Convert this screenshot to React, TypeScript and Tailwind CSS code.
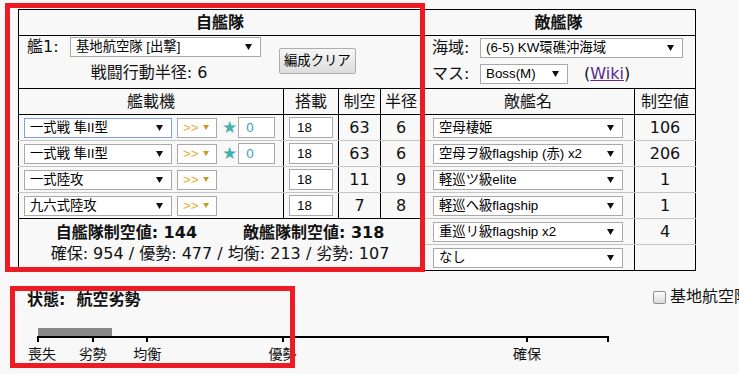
import React from "react";

type Plane = { name: string; star?: boolean; load: number; air: number; radius: number; focus?: boolean };
type Enemy = { name: string; air: number | null };

const planes: Plane[] = [
  { name: "一式戦 隼II型", star: true, load: 18, air: 63, radius: 6, focus: true },
  { name: "一式戦 隼II型", star: true, load: 18, air: 63, radius: 6 },
  { name: "一式陸攻", load: 18, air: 11, radius: 9 },
  { name: "九六式陸攻", load: 18, air: 7, radius: 8 },
];

const enemies: Enemy[] = [
  { name: "空母棲姫", air: 106 },
  { name: "空母ヲ級flagship (赤) x2", air: 206 },
  { name: "軽巡ツ級elite", air: 1 },
  { name: "軽巡ヘ級flagship", air: 1 },
  { name: "重巡リ級flagship x2", air: 4 },
  { name: "なし", air: null },
];

// air superiority thresholds
const marks = [
  { label: "喪失", value: 0 },
  { label: "劣勢", value: 107 },
  { label: "均衡", value: 213 },
  { label: "優勢", value: 477 },
  { label: "確保", value: 954 },
];
const scale = 489 / 954;
const axisEnd = 570;
const ownAir = 144;

const uiFont = "font-['Liberation_Sans','Noto_Sans_CJK_JP',sans-serif] text-[13.33px]";

function Arrow({ color = "#111", w = 7, h = 6 }: { color?: string; w?: number; h?: number }) {
  return (
    <svg width={w} height={h} viewBox={`0 0 ${w} ${h}`} className="shrink-0">
      <polygon points={`0,0 ${w},0 ${w / 2},${h}`} fill={color} />
    </svg>
  );
}

function Select({ text, className, focus }: { text: string; className: string; focus?: boolean }) {
  return (
    <div
      className={`flex h-[20px] items-center justify-between border bg-white pl-[5px] pr-[8px] leading-none text-black ${uiFont} ${
        focus ? "border-[#7da2e3]" : "border-[#a9a9a9]"
      } ${className}`}
    >
      <span className="whitespace-nowrap">{text}</span>
      <Arrow />
    </div>
  );
}

function Input({ value, className }: { value: string; className: string }) {
  return (
    <div className={`flex h-[21px] items-center border border-[#a9a9a9] bg-white pl-[7px] leading-none ${uiFont} ${className}`}>
      {value}
    </div>
  );
}

export default function App() {
  return (
    <div className="relative h-[374px] w-[739px] overflow-hidden bg-[#f8f8f8] font-['DejaVu_Sans','Noto_Sans_CJK_JP',sans-serif] text-[16px] text-[#111]">
      <div className="pl-[18px] pt-[9px]">
        <table className="w-[677px] table-fixed border-collapse">
          <colgroup>
            <col className="w-[265px]" />
            <col className="w-[55px]" />
            <col className="w-[42px]" />
            <col className="w-[41px]" />
            <col className="w-[213px]" />
            <col className="w-[61px]" />
          </colgroup>
          <tbody>
            <tr>
              <td colSpan={4} className="h-[26px] border border-black p-0 text-center font-bold leading-[20px]">
                自艦隊
              </td>
              <td colSpan={2} className="h-[26px] border border-black p-0 text-center font-bold leading-[20px]">
                敵艦隊
              </td>
            </tr>
            <tr>
              <td colSpan={4} className="h-[53px] border border-black p-0 align-top">
                <div className="flex items-center pl-[8px]">
                  <div className="flex w-[234px] flex-col pt-[1px]">
                    <div className="flex items-center">
                      <span className="w-[43px] leading-[20px]">艦1:</span>
                      <Select text="基地航空隊 [出撃]" className="w-[191px]" />
                    </div>
                    <div className="mt-[6px] pl-[10px] text-center leading-[20px]">戦闘行動半径: 6</div>
                  </div>
                  <button
                    className={`ml-[18px] mt-[2px] h-[26px] rounded-[2px] border border-[#adadad] bg-gradient-to-b from-[#f6f6f6] to-[#dddddd] px-[4px] leading-none text-black ${uiFont}`}
                  >
                    編成クリア
                  </button>
                </div>
              </td>
              <td colSpan={2} className="h-[53px] border border-black p-0 align-top">
                <div className="flex flex-col gap-[6px] pl-[10px] pt-[2px]">
                  <div className="flex items-center">
                    <span className="w-[48px] leading-[20px]">海域:</span>
                    <Select text="(6-5) KW環礁沖海域" className="w-[203px]" />
                  </div>
                  <div className="flex items-center">
                    <span className="w-[48px] leading-[20px]">マス:</span>
                    <Select text="Boss(M)" className="w-[88px]" />
                    <span className="ml-[16px] leading-[20px]">
                      (<span className="text-[#5b2a8e] underline">Wiki</span>)
                    </span>
                  </div>
                </div>
              </td>
            </tr>
            <tr className="text-center leading-[20px]">
              <td className="h-[26px] border border-black p-0">艦載機</td>
              <td className="h-[26px] border border-black p-0">搭載</td>
              <td className="h-[26px] border border-black p-0">制空</td>
              <td className="h-[26px] border border-black p-0">半径</td>
              <td className="h-[26px] border border-black p-0">敵艦名</td>
              <td className="h-[26px] border border-black p-0">制空値</td>
            </tr>
            {enemies.map((e, i) => {
              const p = planes[i];
              const leftCls = `h-[26px] border border-black p-0 ${i > 0 ? "border-t-[#c4c4c4]" : ""} ${
                i < 3 ? "border-b-[#c4c4c4]" : ""
              }`;
              const rightCls = `h-[26px] border border-black p-0 ${i > 0 ? "border-t-[#c4c4c4]" : ""} ${
                i < 5 ? "border-b-[#c4c4c4]" : ""
              }`;
              return (
                <tr key={i}>
                  {p && (
                    <>
                      <td className={leftCls}>
                        <div className="flex items-center pl-[5px]">
                          <Select text={p.name} focus={p.focus} className="w-[148px]" />
                          <div
                            className={`ml-[5px] flex h-[20px] w-[40px] items-center justify-between border border-[#a9a9a9] bg-white pl-[5px] pr-[7px] leading-none text-[#eeaa33] ${uiFont}`}
                          >
                            <span>&gt;&gt;</span>
                            <Arrow color="#cc9922" w={6} h={5} />
                          </div>
                          {p.star && (
                            <>
                              <span className="ml-[5px] text-[17px] leading-none text-[#45b0ad]">★</span>
                              <Input value="0" className="ml-[1px] w-[37px] text-[#3ba0c0]" />
                            </>
                          )}
                        </div>
                      </td>
                      <td className={leftCls}>
                        <Input value={String(p.load)} className="ml-[5px] w-[44px] text-black" />
                      </td>
                      <td className={`${leftCls} text-center leading-[20px]`}>{p.air}</td>
                      <td className={`${leftCls} text-center leading-[20px]`}>{p.radius}</td>
                    </>
                  )}
                  {i === 4 && (
                    <td colSpan={4} rowSpan={2} className="border border-black p-0 pb-[4px] text-center leading-[21px]">
                      <div className="font-bold">
                        自艦隊制空値: {ownAir}
                        <span className="ml-[46px]">敵艦隊制空値: 318</span>
                      </div>
                      <div>確保: 954 / 優勢: 477 / 均衡: 213 / 劣勢: 107</div>
                    </td>
                  )}
                  <td className={rightCls}>
                    <Select text={e.name} className="ml-[11px] h-[19px] w-[190px]" />
                  </td>
                  <td className={`${rightCls} text-center leading-[20px]`}>{e.air ?? ""}</td>
                </tr>
              );
            })}
          </tbody>
        </table>
      </div>

      <div className="flex items-start">
        <div className="w-[653px] shrink-0 pl-[27px] pt-[19px]">
          <p className="font-bold leading-[20px]">
            状態:<span className="ml-[11px]">航空劣勢</span>
          </p>
          <div className="relative ml-[11px] mt-[18px] h-[36px] w-[572px]">
            <div className="absolute left-0 top-0 h-[8px] bg-[#888888]" style={{ width: ownAir * scale }} />
            <div className="absolute left-[-1px] top-[8px] h-[2px] w-[572px] bg-black" />
            {[...marks.map((m) => m.value * scale), axisEnd].map((x, i) => (
              <div key={i} className="absolute top-[8px] h-[6px] w-[2px] bg-black" style={{ left: x - 1 }} />
            ))}
            {marks.map((m, i) => (
              <span
                key={m.label}
                className="absolute top-[18px] -translate-x-1/2 whitespace-nowrap text-[14px] leading-[16px]"
                style={{ left: m.value * scale + (i === 0 ? 4 : 0) }}
              >
                {m.label}
              </span>
            ))}
          </div>
        </div>
        <label className="flex shrink-0 items-center gap-[4px] whitespace-nowrap pt-[16px] leading-[20px]">
          <span className="h-[13px] w-[13px] rounded-[2px] border border-[#8f8f8f] bg-gradient-to-b from-[#fbfbfb] to-[#dcdcdc]" />
          基地航空隊
        </label>
      </div>

      <div className="pointer-events-none absolute left-[5px] top-[3px] h-[269px] w-[420px] border-[5px] border-[#ed1c24]" />
      <div className="pointer-events-none absolute left-[10px] top-[286px] h-[82px] w-[285px] border-[5px] border-[#ed1c24]" />
    </div>
  );
}
